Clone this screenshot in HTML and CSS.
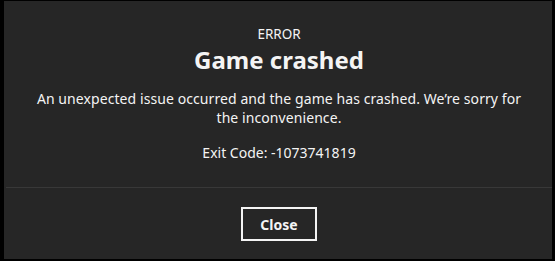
FILE: index.html
```html
<!DOCTYPE html>
<html>
<head>
<meta charset="utf-8">
<link rel="stylesheet" href="styles.css">
</head>
<body>
<div class="dialog">
  <div class="content">
    <div class="eyebrow">ERROR</div>
    <h1 class="title">Game crashed</h1>
    <p class="message">An unexpected issue occurred and the game has crashed. We’re sorry for the inconvenience.</p>
    <p class="code">Exit Code: -1073741819</p>
  </div>
  <div class="footer">
    <button class="close">Close</button>
  </div>
</div>
</body>
</html>
```
FILE: styles.css
```css
html, body {
  margin: 0;
  padding: 0;
  background: #000;
}
body {
  width: 555px;
  height: 261px;
  overflow: hidden;
  font-family: "Noto Sans", "Open Sans", sans-serif;
  color: #f4f4f4;
}
.dialog {
  margin: 1px 3px 0 4px;
  width: 548px;
  height: 258px;
  background: #262626;
  display: flex;
  flex-direction: column;
  box-sizing: border-box;
}
.content {
  padding: 25px 20px 25px 20px;
  text-align: center;
  border-bottom: 1px solid #383838;
  margin-left: 2px;
}
.eyebrow {
  font-size: 13.5px;
  line-height: 17px;
  margin-bottom: 2px;
}
.title {
  margin: 0;
  font-size: 24px;
  line-height: 29px;
  font-weight: 700;
}
.message {
  margin: 15px auto 0;
  font-size: 14px;
  line-height: 19px;
  letter-spacing: 0.08px;
  max-width: 495px;
}
.code {
  margin: 16px 0 0;
  font-size: 14px;
  line-height: 19px;
}
.footer {
  display: flex;
  justify-content: center;
  padding-top: 19px;
}
.close {
  width: 76px;
  height: 34px;
  border: 2px solid #f4f4f4;
  background: transparent;
  color: #f4f4f4;
  font-family: "Noto Sans", "Open Sans", sans-serif;
  font-size: 14px;
  font-weight: 700;
  padding: 0;
  margin-left: 2px;
}
```
